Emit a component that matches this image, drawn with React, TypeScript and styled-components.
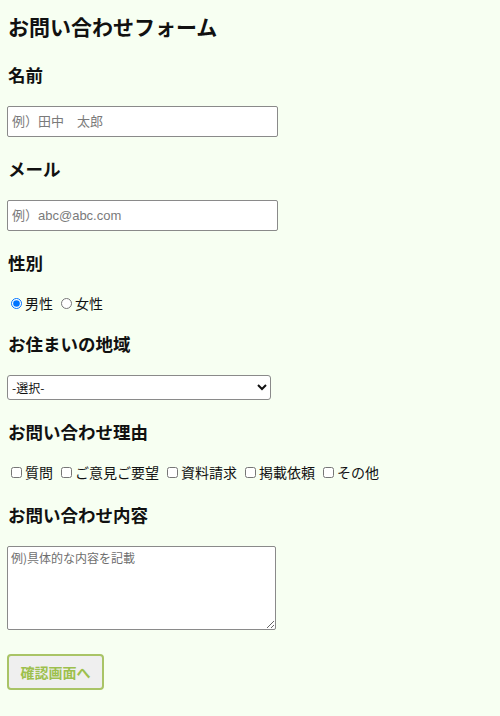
import React, { useState } from 'react';
import styled, { createGlobalStyle } from 'styled-components';

const GlobalStyle = createGlobalStyle`
  html, body {
    margin: 0;
    padding: 0;
    background-color: #f7fff2;
  }
  body {
    font-family: "Noto Sans CJK JP", "Noto Sans", sans-serif;
    color: #111111;
  }
`;

const Page = styled.div`
  padding: 14px 8px 24px 8px;
  min-height: 716px;
  box-sizing: border-box;
`;

const Title = styled.h1`
  margin: 0 0 25px 0;
  font-size: 21px;
  line-height: 24px;
  font-weight: 700;
`;

const Form = styled.form`
  display: flex;
  flex-direction: column;
  gap: 20px;
`;

const Field = styled.div<{ $extraTop?: number }>`
  display: flex;
  flex-direction: column;
  align-items: flex-start;
  gap: 19px;
  margin-top: ${({ $extraTop }) => $extraTop ?? 0}px;
`;

const Label = styled.h3`
  margin: 0;
  font-size: 17.5px;
  line-height: 24px;
  font-weight: 700;
`;

const TextInput = styled.input`
  box-sizing: border-box;
  width: 271px;
  height: 31px;
  margin-left: -1px;
  padding: 0 4px;
  border: 1px solid #8a8a8a;
  border-radius: 2px;
  background: #ffffff;
  font-family: "Liberation Sans", "Noto Sans CJK JP", sans-serif;
  font-size: 13px;
  outline: none;

  &::placeholder {
    color: #7a7a7a;
  }
`;

const OptionRow = styled.div`
  display: flex;
  align-items: center;
  height: 18px;
  gap: 8px;
  padding-left: 3px;
  font-size: 14px;
`;

const Option = styled.label`
  display: flex;
  align-items: center;
  gap: 3px;
  cursor: pointer;

  input {
    margin: 0;
    width: 11px;
    height: 11px;
  }
`;

const Select = styled.select`
  box-sizing: border-box;
  width: 264px;
  height: 25px;
  margin-left: -1px;
  border: 1px solid #8a8a8a;
  border-radius: 3px;
  background: #ffffff;
  font-family: "Noto Sans CJK JP", sans-serif;
  font-size: 12px;
  color: #111111;
`;

const TextArea = styled.textarea`
  box-sizing: border-box;
  width: 269px;
  height: 84px;
  margin-left: -1px;
  padding: 2px 3px;
  border: 1px solid #8a8a8a;
  border-radius: 2px;
  background: #ffffff;
  font-family: "Noto Sans CJK JP", sans-serif;
  font-size: 12px;
  outline: none;

  &::placeholder {
    color: #6e6e6e;
  }
`;

const SubmitButton = styled.button`
  align-self: flex-start;
  box-sizing: border-box;
  width: 97px;
  height: 36px;
  margin: 4px 0 0 -1px;
  border: 2px solid #a9c466;
  border-radius: 4px;
  background-color: #efefef;
  color: #9dc04d;
  font-family: "Noto Sans CJK JP", sans-serif;
  font-size: 14px;
  font-weight: 700;
  cursor: pointer;
`;

const reasons = ['質問', 'ご意見ご要望', '資料請求', '掲載依頼', 'その他'];

const App: React.FC = () => {
  const [gender, setGender] = useState('male');

  return (
    <Page>
      <GlobalStyle />
      <Title>お問い合わせフォーム</Title>
      <Form onSubmit={(e) => e.preventDefault()}>
        <Field>
          <Label>名前</Label>
          <TextInput type="text" placeholder="例）田中　太郎" />
        </Field>
        <Field>
          <Label>メール</Label>
          <TextInput type="email" placeholder="例）abc@abc.com" />
        </Field>
        <Field>
          <Label>性別</Label>
          <OptionRow>
            <Option>
              <input
                type="radio"
                name="gender"
                checked={gender === 'male'}
                onChange={() => setGender('male')}
              />
              男性
            </Option>
            <Option>
              <input
                type="radio"
                name="gender"
                checked={gender === 'female'}
                onChange={() => setGender('female')}
              />
              女性
            </Option>
          </OptionRow>
        </Field>
        <Field>
          <Label>お住まいの地域</Label>
          <Select defaultValue="">
            <option value="">-選択-</option>
            <option value="hokkaido">北海道</option>
            <option value="tohoku">東北</option>
            <option value="kanto">関東</option>
            <option value="kansai">関西</option>
            <option value="kyushu">九州</option>
          </Select>
        </Field>
        <Field>
          <Label>お問い合わせ理由</Label>
          <OptionRow>
            {reasons.map((r) => (
              <Option key={r}>
                <input type="checkbox" name="reason" value={r} />
                {r}
              </Option>
            ))}
          </OptionRow>
        </Field>
        <Field $extraTop={2}>
          <Label>お問い合わせ内容</Label>
          <TextArea placeholder="例)具体的な内容を記載" />
        </Field>
        <SubmitButton type="submit">確認画面へ</SubmitButton>
      </Form>
    </Page>
  );
};

export default App;
